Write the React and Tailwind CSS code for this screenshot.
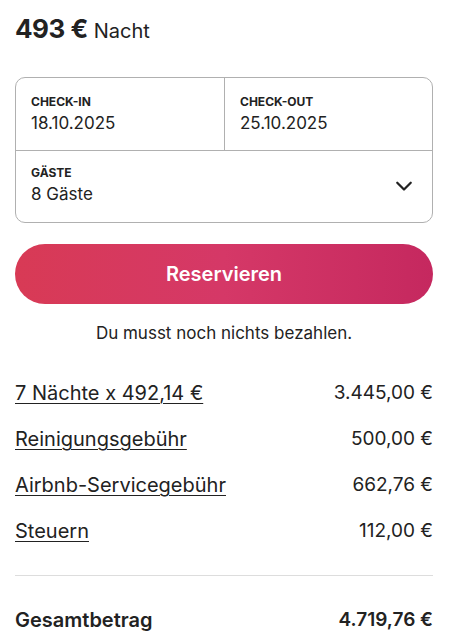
const ROWS = [
  { label: '7 Nächte x 492,14 €', amount: '3.445,00 €' },
  { label: 'Reinigungsgebühr', amount: '500,00 €' },
  { label: 'Airbnb-Servicegebühr', amount: '662,76 €' },
  { label: 'Steuern', amount: '112,00 €' },
]

function Chevron() {
  return (
    <svg viewBox="0 0 32 32" className="h-[18px] w-[18px]" fill="none" stroke="#222222" strokeWidth="4" strokeLinecap="round" strokeLinejoin="round">
      <path d="M28 12 16 24 4 12" />
    </svg>
  )
}

export default function App() {
  return (
    <div className="min-h-[642px] w-[450px] bg-white pl-[15px] pr-[17px] pt-[9px] text-[#222222]" style={{ fontFamily: 'Inter, "Noto Sans", sans-serif' }}>
      <div className="flex items-baseline gap-[6px]">
        <span className="text-[26px] font-bold tracking-[-0.5px]">493 €</span>
        <span className="text-[20px]">Nacht</span>
      </div>

      <div className="mt-[29px] overflow-hidden rounded-[10px] border border-[#b0b0b0]">
        <div className="grid grid-cols-2 border-b border-[#b0b0b0]">
          <div className="px-[15px] pb-[16px] pt-[16px]">
            <div className="text-[12px] font-bold uppercase leading-[16px]">Check-in</div>
            <div className="mt-[2px] text-[17px] leading-[22px]">18.10.2025</div>
          </div>
          <div className="border-l border-[#b0b0b0] px-[15px] pb-[16px] pt-[16px]">
            <div className="text-[12px] font-bold uppercase leading-[16px]">Check-out</div>
            <div className="mt-[2px] text-[17px] leading-[22px]">25.10.2025</div>
          </div>
        </div>
        <div className="flex items-center justify-between px-[15px] pb-[17px] pt-[14px]">
          <div>
            <div className="text-[12px] font-bold uppercase leading-[16px]">Gäste</div>
            <div className="mt-[2px] text-[17px] leading-[22px]">8 Gäste</div>
          </div>
          <div className="mr-[4px]">
            <Chevron />
          </div>
        </div>
      </div>

      <button className="mt-[21px] flex h-[60px] w-full items-center justify-center rounded-full bg-gradient-to-r from-[#d83a55] via-[#d53867] to-[#c5285f] text-[20px] font-semibold text-white">
        Reservieren
      </button>

      <p className="mt-[17px] text-center text-[17px]">Du musst noch nichts bezahlen.</p>

      <div className="mt-[33px] flex flex-col gap-[20px]">
        {ROWS.map((row) => (
          <div key={row.label} className="flex items-center justify-between leading-[26px]">
            <span className="text-[20px] underline decoration-1 underline-offset-[3px]">{row.label}</span>
            <span className="text-[19px]">{row.amount}</span>
          </div>
        ))}
      </div>

      <div className="mt-[31px] border-t border-[#dddddd]" />

      <div className="mt-[31px] flex items-center justify-between font-semibold leading-[26px]">
        <span className="text-[20px]">Gesamtbetrag</span>
        <span className="text-[19px]">4.719,76 €</span>
      </div>
    </div>
  )
}
